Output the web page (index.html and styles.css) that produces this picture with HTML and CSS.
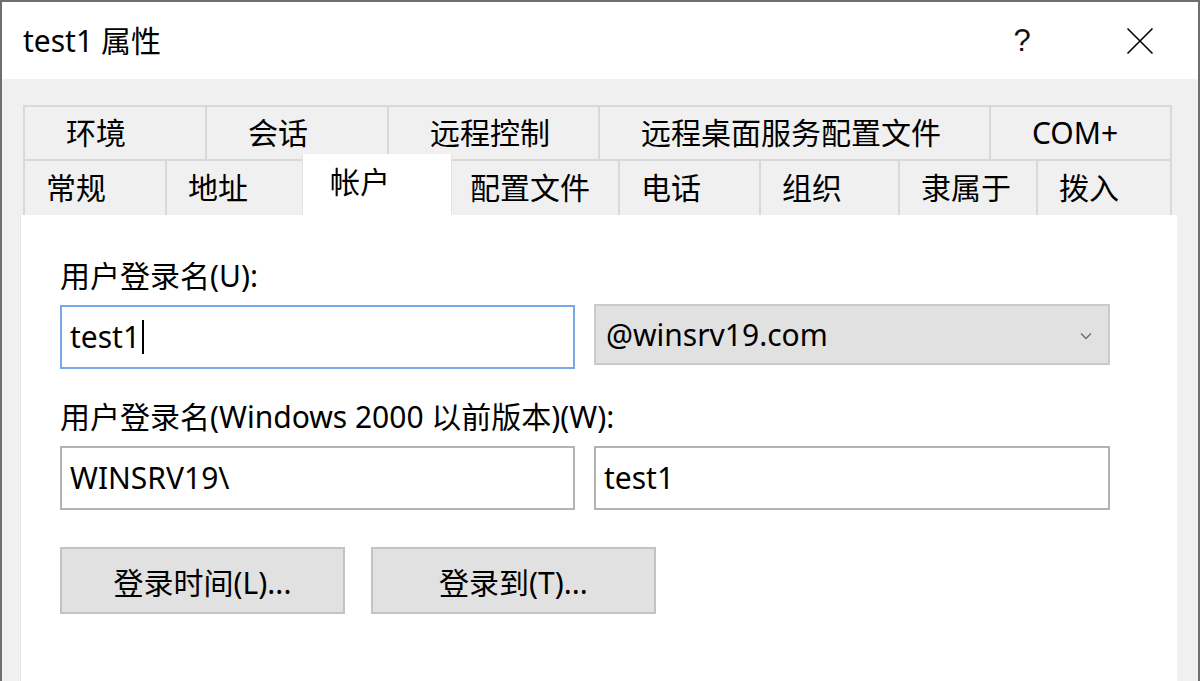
FILE: index.html
```html
<!DOCTYPE html>
<html lang="zh-CN">
<head>
<meta charset="utf-8">
<title>test1 属性</title>
<link rel="stylesheet" href="styles.css">
</head>
<body>
<div class="window">
  <div class="titlebar">
    <div class="title">test1 属性</div>
    <div class="tb-btn help">?</div>
    <div class="tb-btn close">
      <svg width="28" height="28" viewBox="0 0 28 28"><path d="M1.5 1.5 L26.5 26.5 M26.5 1.5 L1.5 26.5" stroke="#000" stroke-width="1.6" fill="none"/></svg>
    </div>
  </div>
  <div class="client">
    <div class="tabs">
      <div class="tabrow row1">
        <div class="tab">环境</div>
        <div class="tab">会话</div>
        <div class="tab">远程控制</div>
        <div class="tab">远程桌面服务配置文件</div>
        <div class="tab last">COM+</div>
      </div>
      <div class="tabrow row2">
        <div class="tab">常规</div>
        <div class="tab">地址</div>
        <div class="tab selected">帐户</div>
        <div class="tab narrow">配置文件</div>
        <div class="tab">电话</div>
        <div class="tab">组织</div>
        <div class="tab">隶属于</div>
        <div class="tab last">拨入</div>
      </div>
    </div>
    <div class="panel">
      <div class="label">用户登录名(U):</div>
      <div class="fields">
        <div class="textbox focused">test1<span class="caret"></span></div>
        <div class="combo"><span>@winsrv19.com</span>
          <svg class="chev" width="12" height="8" viewBox="0 0 12 8"><path d="M1 1.5 L6 6.5 L11 1.5" stroke="#6a6a6a" stroke-width="1.3" fill="none"/></svg>
        </div>
      </div>
      <div class="label second">用户登录名(Windows 2000 以前版本)(W):</div>
      <div class="fields">
        <div class="textbox">WINSRV19\</div>
        <div class="textbox">test1</div>
      </div>
      <div class="buttons">
        <div class="button">登录时间(L)...</div>
        <div class="button">登录到(T)...</div>
      </div>
    </div>
  </div>
</div>
</body>
</html>
```
FILE: styles.css
```css
* { box-sizing: border-box; }
html, body {
  margin: 0;
  padding: 0;
  width: 1200px;
  height: 681px;
  overflow: hidden;
  background: #f0f0f0;
}
body {
  font-family: "Noto Sans", "Noto Sans CJK SC", sans-serif;
  font-size: 30px;
  color: #000;
}
.window {
  width: 1200px;
  height: 681px;
  border: 2px solid #6f6f6f;
  border-bottom: none;
  display: flex;
  flex-direction: column;
  background: #f0f0f0;
}
.titlebar {
  height: 77px;
  flex: none;
  background: #fff;
  display: flex;
  align-items: center;
}
.title {
  flex: 1;
  padding-left: 21px;
  line-height: 77px;
  white-space: nowrap;
}
.tb-btn {
  width: 116px;
  height: 77px;
  display: flex;
  align-items: center;
  justify-content: center;
}
.help {
  font-family: "Liberation Sans", sans-serif;
  font-size: 31px;
  font-weight: 300;
  color: #111;
  padding-right: 4px;
}
.close svg { display: block; }
.client {
  flex: 1;
  padding: 26px 21px 0 18px;
  display: flex;
  flex-direction: column;
}
.tabs {
  margin: 0 5px 0 3px;
}
.tabrow {
  display: grid;
}
.row1 { grid-template-columns: 182px 182px 211px 391px 183px; }
.row2 { grid-template-columns: 142px 137px 150px 166px 141px 139px 138px 136px; }
.tab {
  border-top: 2px solid #d9d9d9;
  border-left: 2px solid #d9d9d9;
  background: #f0f0f0;
  white-space: nowrap;
  overflow: hidden;
}
.tab.last { border-right: 2px solid #d9d9d9; }
.row1 .tab {
  line-height: 52px;
  padding-left: 41px;
}
.row2 .tab {
  line-height: 54px;
  padding-left: 21px;
}
.row2 .tab.narrow { padding-left: 18px; }
.row2 .tab.selected {
  background: #fff;
  border: none;
  border-left: 1px solid #e4e4e4;
  border-right: 1px solid #e4e4e4;
  margin-top: -5px;
  line-height: 56px;
  padding-bottom: 5px;
  padding-left: 27px;
}
.row2 .tab.selected + .tab { border-left: none; }
.panel {
  flex: 1;
  background: #fff;
  border-left: 1px solid #e6e6e6;
  padding: 41px 0 0 39px;
}
.label {
  line-height: 40px;
  white-space: nowrap;
}
.label.second { margin-top: 28px; }
.fields {
  margin-top: 9px;
  display: grid;
  grid-template-columns: 515px 516px;
  column-gap: 19px;
  align-items: start;
}
.textbox {
  height: 64px;
  border: 2px solid #b3b3b3;
  background: #fff;
  padding-left: 8px;
  line-height: 58px;
  white-space: nowrap;
  display: flex;
  align-items: center;
}
.textbox.focused { border-color: #7aa7e8; }
.caret {
  display: inline-block;
  width: 2px;
  height: 34px;
  background: #000;
  margin-left: 2px;
}
.combo {
  height: 61px;
  margin-top: -1px;
  border: 2px solid #cacaca;
  background: #e1e1e1;
  padding: 0 16px 0 10px;
  display: flex;
  align-items: center;
  justify-content: space-between;
  white-space: nowrap;
}
.chev { display: block; margin-top: 2px; }
.buttons {
  margin-top: 37px;
  display: flex;
  gap: 26px;
}
.button {
  width: 285px;
  height: 67px;
  border: 2px solid #c3c3c3;
  background: #e1e1e1;
  display: flex;
  align-items: center;
  justify-content: center;
  white-space: nowrap;
}
```
